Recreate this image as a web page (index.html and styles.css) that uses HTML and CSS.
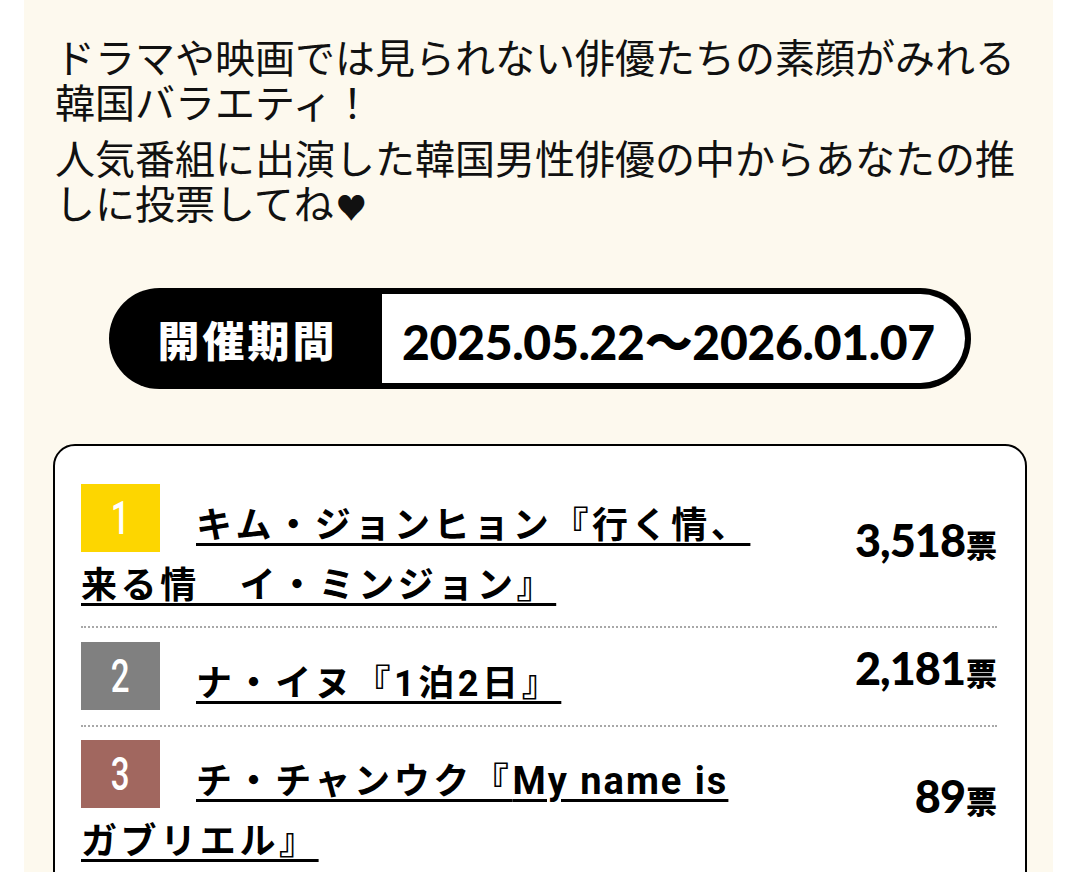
FILE: index.html
```html
<!DOCTYPE html>
<html lang="ja">
<head>
<meta charset="utf-8">
<title>韓国バラエティ 投票</title>
<link rel="stylesheet" href="styles.css">
</head>
<body>
<div class="page">
  <div class="intro">
    <p>ドラマや映画では見られない俳優たちの素顔がみれる<br>韓国バラエティ！</p>
    <p>人気番組に出演した韓国男性俳優の中からあなたの推しに投票してね<span class="heart">♥</span></p>
  </div>

  <div class="period">
    <div class="period-label">開催期間</div>
    <div class="period-date">2025.05.22〜2026.01.07</div>
  </div>

  <div class="ranking">
    <div class="rank-row">
      <div class="rank-title"><span class="badge badge-1"><span class="badge-num">1</span></span><a class="rank-link" href="#">キム・ジョンヒョン『行く情、来る情　イ・ミンジョン』</a></div>
      <div class="votes">3,518<span class="unit">票</span></div>
    </div>
    <div class="rank-row">
      <div class="rank-title"><span class="badge badge-2"><span class="badge-num">2</span></span><a class="rank-link" href="#">ナ・イヌ『1泊2日』</a></div>
      <div class="votes">2,181<span class="unit">票</span></div>
    </div>
    <div class="rank-row">
      <div class="rank-title"><span class="badge badge-3"><span class="badge-num">3</span></span><a class="rank-link" href="#">チ・チャンウク『<span class="latin">My name is</span> ガブリエル』</a></div>
      <div class="votes">89<span class="unit">票</span></div>
    </div>
  </div>
</div>
</body>
</html>
```

FILE: styles.css
```css
html, body {
  margin: 0;
  padding: 0;
  background: #ffffff;
}

body {
  font-family: "Noto Sans CJK JP", "Noto Sans", sans-serif;
  color: #111111;
}

.page {
  margin-left: 24px;
  width: 1029px;
  box-sizing: border-box;
  padding: 34px 26px 40px 29px;
  background: #fdf9ee;
  min-height: 872px;
}

.intro {
  padding-left: 2px;
}

.intro p {
  margin: 0;
  font-size: 40px;
  line-height: 45px;
  font-weight: 400;
}

.intro p + p {
  margin-top: 11px;
}

.heart {
  font-size: 31px;
  margin-left: 2px;
}

.period {
  margin: 60px auto 0;
  width: 862px;
  height: 101px;
  box-sizing: border-box;
  background: #000000;
  border-radius: 51px;
  padding: 6px 6px 6px 0;
  display: flex;
}

.period-label {
  width: 269px;
  display: flex;
  align-items: center;
  justify-content: center;
  padding-left: 4px;
  color: #ffffff;
  font-size: 42px;
  font-weight: 900;
  letter-spacing: 3px;
}

.period-date {
  flex: 1;
  background: #ffffff;
  border-radius: 0 45px 45px 0;
  display: flex;
  align-items: center;
  justify-content: center;
  padding-right: 10px;
  font-family: "Lato", "Noto Sans CJK JP", sans-serif;
  font-weight: 900;
  font-size: 48px;
  letter-spacing: -0.3px;
  color: #000000;
}

.ranking {
  margin-top: 55px;
  background: #ffffff;
  border: 2px solid #000000;
  border-radius: 22px;
  padding: 25px 28px 20px 26px;
}

.rank-row {
  display: flex;
  align-items: center;
  padding: 13px 0 10px;
  border-bottom: 2px dotted #a8a8a8;
}

.rank-row:last-child {
  border-bottom: none;
}

.rank-title {
  width: 682px;
  font-family: "Roboto", "Noto Sans CJK JP", sans-serif;
  font-size: 36px;
  font-weight: 700;
  line-height: 60px;
  letter-spacing: 3.6px;
}

.badge {
  display: inline-block;
  width: 79px;
  height: 68px;
  margin-right: 36px;
  vertical-align: -14px;
  overflow: hidden;
  text-align: center;
  line-height: 68px;
  color: #ffffff;
  font-family: "Roboto", sans-serif;
  font-weight: 500;
  font-size: 46px;
  letter-spacing: 0;
}

.badge-num {
  display: inline-block;
  transform: scaleX(0.72);
}

.badge-1 {
  background: #fdd600;
}

.badge-2 {
  background: #808080;
}

.badge-3 {
  background: #a1675f;
}

.rank-link {
  color: #000000;
  text-decoration: underline;
  text-decoration-thickness: 3px;
  text-underline-offset: 5px;
}

.latin {
  font-size: 38px;
  letter-spacing: 2px;
}

.votes {
  flex: 1;
  text-align: right;
  padding-bottom: 20px;
  font-family: "Lato", sans-serif;
  font-weight: 900;
  font-size: 45px;
  letter-spacing: -1px;
  color: #000000;
  white-space: nowrap;
}

.unit {
  font-family: "Noto Sans CJK JP", sans-serif;
  font-size: 31px;
  font-weight: 900;
  letter-spacing: 0;
  margin-left: 1px;
}
```
